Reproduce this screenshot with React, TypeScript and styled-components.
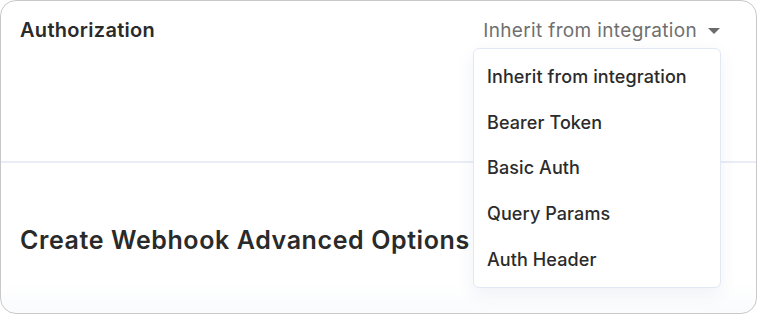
import { useState } from "react";
import styled, { createGlobalStyle } from "styled-components";

const options = [
  "Inherit from integration",
  "Bearer Token",
  "Basic Auth",
  "Query Params",
  "Auth Header",
];

export default function App() {
  const [value, setValue] = useState<string>(options[0]);
  const [open, setOpen] = useState<boolean>(true);

  return (
    <>
      <GlobalStyle />
      <Card>
        <AuthSection>
          <Label>Authorization</Label>
          <SelectWrap>
            <Trigger onClick={() => setOpen((p) => !p)}>
              {value}
              <Caret viewBox="0 0 12 6" aria-hidden>
                <path d="M0 0h12L6 6z" fill="currentColor" />
              </Caret>
            </Trigger>
            {open && (
              <Menu>
                {options.map((o) => (
                  <Item
                    key={o}
                    onClick={() => {
                      setValue(o);
                      setOpen(false);
                    }}
                  >
                    {o}
                  </Item>
                ))}
              </Menu>
            )}
          </SelectWrap>
        </AuthSection>
        <OptionsSection>
          <Heading>Create Webhook Advanced Options</Heading>
        </OptionsSection>
      </Card>
    </>
  );
}

const GlobalStyle = createGlobalStyle`
  body {
    margin: 0;
    background: #fff;
    font-family: Inter, "Noto Sans", sans-serif;
  }
`;

const Card = styled.div`
  box-sizing: border-box;
  width: 757px;
  height: 314px;
  border: 1px solid #c9c9c9;
  border-radius: 16px;
  background: linear-gradient(to bottom, #fff 90%, #fafbfd 100%);
  display: flex;
  flex-direction: column;
`;

const AuthSection = styled.div`
  box-sizing: border-box;
  height: 162px;
  padding: 16px 36px 0 19px;
  display: flex;
  justify-content: space-between;
  align-items: flex-start;
  border-bottom: 2px solid #e9edf7;
`;

const Label = styled.div`
  font-size: 20px;
  font-weight: 600;
  letter-spacing: 0.3px;
  color: #2a2a2a;
  line-height: 26px;
`;

const SelectWrap = styled.div`
  position: relative;
`;

const Trigger = styled.button`
  display: flex;
  align-items: center;
  gap: 11px;
  border: none;
  background: none;
  padding: 0;
  font-family: inherit;
  font-size: 19px;
  font-weight: 400;
  letter-spacing: 0.35px;
  line-height: 28px;
  color: #6f6f6f;
  cursor: pointer;
`;

const Caret = styled.svg`
  width: 12px;
  height: 6px;
  color: #6b6b6b;
`;

const Menu = styled.ul`
  position: absolute;
  top: 31px;
  right: -1px;
  width: 248px;
  box-sizing: border-box;
  margin: 0;
  padding: 5px 0;
  list-style: none;
  background: #fff;
  border: 1px solid #e2e8f3;
  border-radius: 6px;
  box-shadow: 0 6px 18px rgba(40, 70, 140, 0.07);
  z-index: 10;
`;

const Item = styled.li`
  height: 45.6px;
  display: flex;
  align-items: center;
  padding: 0 13px;
  font-size: 18px;
  font-weight: 500;
  letter-spacing: 0.1px;
  color: #2b2b2b;
  cursor: pointer;
`;

const OptionsSection = styled.div`
  flex: 1;
  display: flex;
  align-items: center;
  padding: 4px 19px 0;
`;

const Heading = styled.h2`
  margin: 0;
  font-size: 25px;
  font-weight: 600;
  letter-spacing: 0.6px;
  color: #2a2a2a;
`;
